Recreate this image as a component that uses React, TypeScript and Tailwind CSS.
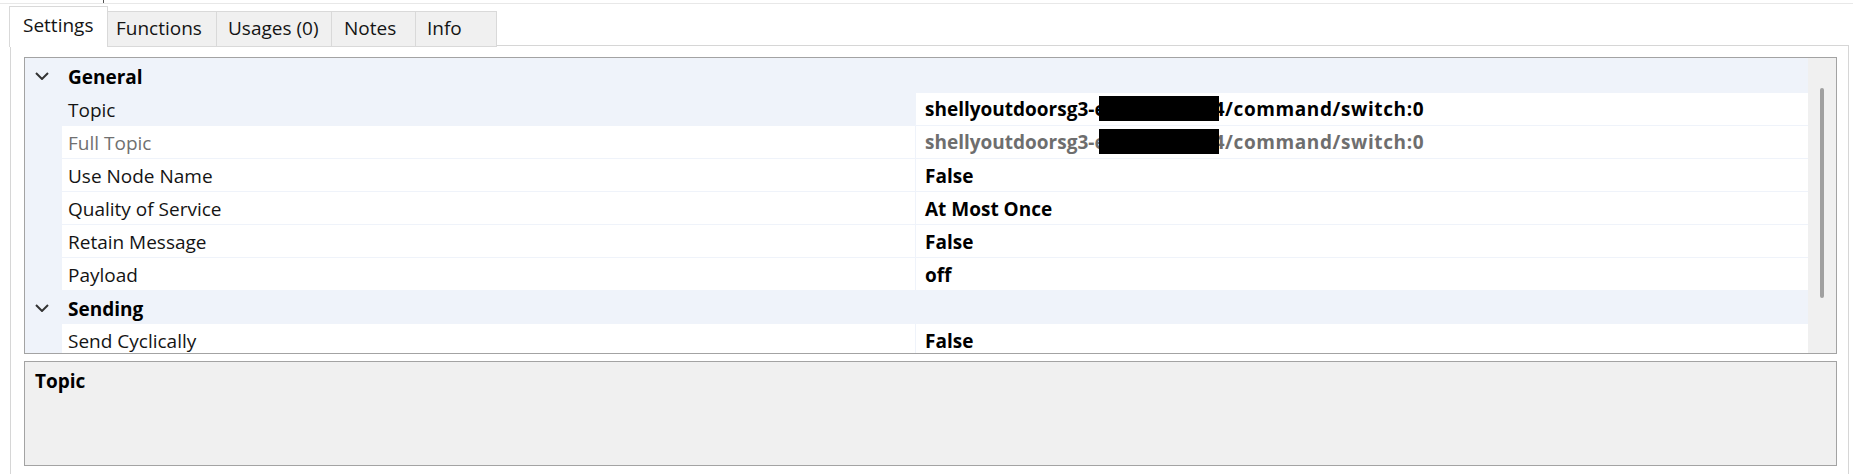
import React from "react";

const Chevron = () => (
  <svg width="14" height="8" viewBox="0 0 14 8" className="block">
    <path d="M1 1 L7 7 L13 1" fill="none" stroke="#333333" strokeWidth="2" />
  </svg>
);

const Redacted = ({ pre, post }: { pre: string; post: string }) => (
  <span className="whitespace-nowrap">
    {pre}
    <span className="inline-block align-middle w-[120px] h-[25px] bg-black ml-[-7px] mr-[-5px] relative top-[-2px]" />
    <span className="tracking-[0.6px]">{post}</span>
  </span>
);

type Row = {
  kind: "cat" | "prop";
  name: string;
  value?: React.ReactNode;
  selected?: boolean;
  disabled?: boolean;
  h?: string;
};

const rows: Row[] = [
  { kind: "cat", name: "General", h: "h-[35px]" },
  {
    kind: "prop",
    name: "Topic",
    selected: true,
    value: <Redacted pre="shellyoutdoorsg3-e" post="4/command/switch:0" />,
  },
  {
    kind: "prop",
    name: "Full Topic",
    disabled: true,
    value: <Redacted pre="shellyoutdoorsg3-e" post="4/command/switch:0" />,
  },
  { kind: "prop", name: "Use Node Name", value: "False" },
  { kind: "prop", name: "Quality of Service", value: "At Most Once" },
  { kind: "prop", name: "Retain Message", value: "False" },
  { kind: "prop", name: "Payload", value: "off" },
  { kind: "cat", name: "Sending" },
  { kind: "prop", name: "Send Cyclically", value: "False" },
];

export default function App() {
  return (
    <div className="w-[1853px] h-[474px] bg-white overflow-hidden font-['Open_Sans',sans-serif] text-[19px] text-[#141414] leading-none">
      {/* top strip */}
      <div className="h-[4px] border-b border-[#e8e8e8] flex">
        <div className="ml-[103px] w-px h-[3px] bg-[#555]" />
      </div>
      {/* tabs */}
      <div className="flex items-end pl-[9px] h-[43px] pt-[2px] relative z-10 -mb-[2px]">
        <div className="w-[99px] h-[41px] bg-white border border-[#d9d9d9] border-b-0 flex items-center pl-[13px] pb-[4px]">
          Settings
        </div>
        <div className="w-[109px] h-[36px] bg-[#f0f0f0] border border-[#d9d9d9] border-l-0 flex items-center pl-[8px] pb-[1px]">
          Functions
        </div>
        <div className="w-[115px] h-[36px] bg-[#f0f0f0] border border-[#d9d9d9] border-l-0 flex items-center pl-[11px] pb-[1px]">
          Usages (0)
        </div>
        <div className="w-[84px] h-[36px] bg-[#f0f0f0] border border-[#d9d9d9] border-l-0 flex items-center pl-[12px] pb-[1px]">
          Notes
        </div>
        <div className="w-[81px] h-[36px] bg-[#f0f0f0] border border-[#d9d9d9] border-l-0 flex items-center pl-[11px] pb-[1px]">
          Info
        </div>
      </div>
      {/* pane */}
      <div className="ml-[10px] w-[1839px] h-[440px] border border-[#d6d6d6] border-b-0 pl-[13px] pt-[11px]">
        {/* property grid */}
        <div className="w-[1813px] h-[297px] border border-[#a3a3a3] flex overflow-hidden">
          <div className="flex-1 flex flex-col overflow-hidden">
            {rows.map((r, i) =>
              r.kind === "cat" ? (
                <div
                  key={i}
                  className={`${r.h ?? "h-[33px]"} shrink-0 bg-[#eff3fa] flex items-center`}
                >
                  <div className="w-[37px] pl-[10px] flex items-center">
                    <Chevron />
                  </div>
                  <div className="pl-[6px] pt-[3px] font-bold text-black">{r.name}</div>
                </div>
              ) : (
                <div key={i} className="h-[33px] shrink-0 bg-[#eff3fa] flex">
                  <div className="w-[37px]" />
                  <div
                    className={`w-[853px] h-[32px] flex items-center pl-[6px] pt-[3px] ${
                      r.selected ? "bg-[#eff3fa]" : "bg-white"
                    } ${r.disabled ? "text-[#707070]" : ""}`}
                  >
                    {r.name}
                  </div>
                  <div
                    className={`flex-1 ml-px h-[32px] bg-white flex items-center pl-[9px] pt-[3px] font-bold ${
                      r.disabled ? "text-[#6e6e6e]" : "text-black"
                    }`}
                  >
                    {r.value}
                  </div>
                </div>
              )
            )}
          </div>
          {/* scrollbar */}
          <div className="w-[28px] bg-[#f0f0f0] flex justify-center pt-[30px]">
            <div className="w-[4px] h-[210px] bg-[#a0a0a0] rounded-full" />
          </div>
        </div>
        {/* description */}
        <div className="mt-[7px] w-[1813px] h-[105px] bg-[#f0f0f0] border border-[#a3a3a3] pl-[10px] pt-[10px]">
          <div className="font-bold text-black">Topic</div>
        </div>
      </div>
    </div>
  );
}
